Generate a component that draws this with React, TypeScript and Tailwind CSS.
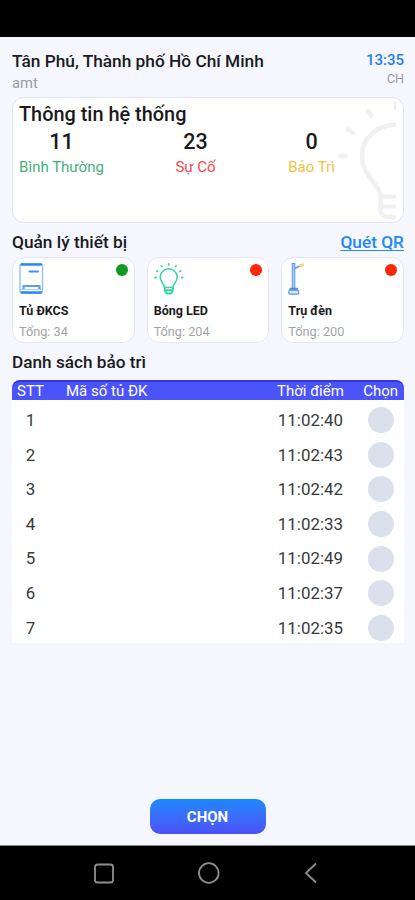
import { useState } from "react";

type Stat = {
  label: string;
  value: number;
  color: string;
  box: string;
};

type Device = {
  name: string;
  total: number;
  online: boolean;
  icon: React.ReactNode;
};

const stats: Stat[] = [
  { label: "Bình Thường", value: 11, color: "text-[#45b07c]", box: "w-[85px]" },
  { label: "Sự Cố", value: 23, color: "text-[#f4474b]", box: "w-[42px]" },
  { label: "Bảo Trì", value: 0, color: "text-[#f2c343]", box: "w-[49px]" },
];

const times = ["11:02:40", "11:02:43", "11:02:42", "11:02:33", "11:02:49", "11:02:37", "11:02:35"];

function CabinetIcon() {
  return (
    <svg width="25" height="33" viewBox="0 0 25 33" fill="none">
      <rect x="1" y="2" width="22.5" height="29" rx="2" stroke="#8dbcf8" strokeWidth="1.3" />
      <path d="M2.500 2.500h19.500M2.500 30.500h19.500" stroke="#2f88ef" strokeWidth="2.3" strokeLinecap="round" />
      <path d="M10.500 9.500h8.500" stroke="#3b90f2" strokeWidth="2" strokeLinecap="round" />
      <path d="M4.500 27v-3h16v3" stroke="#5a9ef3" strokeWidth="2.2" strokeLinejoin="round" />
      <path d="M1 27.500h22.500" stroke="#9cc6f8" strokeWidth="0.8" />
    </svg>
  );
}

function BulbIcon() {
  return (
    <svg width="30" height="33" viewBox="0 0 30 33" fill="none" stroke="#3bd3a4" strokeLinecap="round">
      <path d="M10.500 25.500c0-3.500-4.300-5.500-4.300-10.300a8.500 8.500 0 0 1 17 0c0 4.800-4.300 6.800-4.300 10.300z" strokeWidth="1.5" />
      <path d="M10.800 25.500v3.500l2 2.500h4l2-2.500v-3.500M11 28.300h7.500" strokeWidth="1.9" />
      <path
        d="M14.700 2v.8M7.500 4l.4.600M22 4l-.4.600M3 9l.6.400M26.600 9l-.6.400M1.200 15.500h.8M27.800 15.500h.8"
        strokeWidth="1.8"
      />
    </svg>
  );
}

function PoleIcon() {
  return (
    <svg width="18" height="33" viewBox="0 0 18 33" fill="none">
      <rect x="4.200" y="1.500" width="2.600" height="25" fill="#a9cdf7" stroke="#5a98e6" strokeWidth="1" />
      <path d="M6.500 6.500l6-2.700" stroke="#5a98e6" strokeWidth="1.5" />
      <path d="M12.500 3.500l2.300-.6" stroke="#f5d48a" strokeWidth="3" strokeLinecap="round" />
      <path d="M2 26.300h7.500v2.200H2z" fill="#5a98e6" stroke="#3b86e0" strokeWidth="0.9" />
      <rect x="0.800" y="28.200" width="10" height="4" rx="1.5" fill="#d6e7fb" stroke="#5a98e6" strokeWidth="1.2" />
    </svg>
  );
}

// faded half bulb on the right edge of the summary card
function BulbWatermark() {
  return (
    <svg
      className="absolute -top-px right-[7px]"
      width="60"
      height="126"
      viewBox="336 97 60 126"
      fill="none"
      stroke="#f0f0f0"
      strokeWidth="4.500"
    >
      <path d="M398 124.500C377 124.500 362 138 362 156C362 173 376 182 380.500 194V209Q380.500 217 389 217H398" />
      <path d="M380 196.500h18M380 206.500h18" strokeWidth="4" />
      <path d="M340.500 156h5.500M347.500 129.500l5.500 3.200M368 110.500l3 5M396 103v6" strokeLinecap="round" />
    </svg>
  );
}

const devices: Device[] = [
  { name: "Tủ ĐKCS", total: 34, online: true, icon: <CabinetIcon /> },
  { name: "Bóng LED", total: 204, online: false, icon: <BulbIcon /> },
  { name: "Trụ đèn", total: 200, online: false, icon: <PoleIcon /> },
];

function DeviceCard({ device }: { device: Device }) {
  return (
    <div className="flex h-[86px] flex-col rounded-xl border border-[#e6e6f2] bg-white pt-[4px] pr-[6px] pl-[6px]">
      <div className="flex h-[35px] items-start justify-between">
        {device.icon}
        <span
          className={
            device.online
              ? "mt-[2px] h-3 w-3 rounded-full bg-[#0f9a24]"
              : "mt-[2px] h-3 w-3 rounded-full bg-[#fb260c]"
          }
        />
      </div>
      <p className="mt-[5px] text-[12.5px] leading-[18px] font-bold text-[#1b1b1d]">{device.name}</p>
      <p className="mt-[3px] text-[12.7px] leading-[18px] text-[#a3a3a6]">Tổng: {device.total}</p>
    </div>
  );
}

export default function App() {
  const [selected, setSelected] = useState<number[]>([]);

  const toggle = (i: number) =>
    setSelected((prev) => (prev.includes(i) ? prev.filter((x) => x !== i) : [...prev, i]));

  return (
    <div className="flex h-[900px] w-[415px] flex-col overflow-hidden bg-[#f5f6fe] font-['Roboto','Liberation_Sans',sans-serif] whitespace-nowrap text-[#1a1a1c]">
      <div className="h-[37px] shrink-0 bg-black" />

      <main className="flex flex-1 flex-col px-3">
        <header className="flex h-[60px] w-[392px] justify-between pt-[13px]">
          <div>
            <h1 className="text-[17.3px] leading-[23px] font-medium">Tân Phú, Thành phố Hồ Chí Minh</h1>
            <p className="text-[14.8px] leading-[21px] text-[#9a9a9f]">amt</p>
          </div>
          <div className="text-right">
            <p className="text-[15px] leading-[20px] font-medium text-[#1e80f5]">13:35</p>
            <p className="text-[12.5px] leading-[17px] text-[#98989e]">CH</p>
          </div>
        </header>

        <section className="relative h-[126px] w-[392px] rounded-xl border border-[#e3e4f1] bg-white px-[6px] pt-[4px]">
          <BulbWatermark />
          <h2 className="text-[19.9px] leading-[26px] font-medium">Thông tin hệ thống</h2>
          <div className="flex w-[317px] justify-between">
            {stats.map((s) => (
              <div key={s.label} className={`flex flex-col items-center ${s.box}`}>
                <span className="text-[21.5px] leading-[28px] font-medium">{s.value}</span>
                <span className={`text-[15px] leading-[22px] ${s.color}`}>{s.label}</span>
              </div>
            ))}
          </div>
        </section>

        <div className="mt-[8px] flex h-[24px] w-[392px] items-center justify-between">
          <h2 className="text-[17.3px] font-medium">Quản lý thiết bị</h2>
          <a className="text-[17.3px] font-medium text-[#2389f5] underline decoration-1 underline-offset-2">Quét QR</a>
        </div>

        <section className="mt-[2px] grid w-[392px] grid-cols-3 gap-[12px]">
          {devices.map((d) => (
            <DeviceCard key={d.name} device={d} />
          ))}
        </section>

        <h2 className="mt-[7px] text-[17.2px] leading-[24px] font-medium">Danh sách bảo trì</h2>

        <section className="mt-[6px] w-[392px]">
          <div className="flex h-[20px] items-center rounded-t-lg border-t-2 border-[#3038e0] bg-[#4b54fa] pl-[5px] text-[15px] text-white">
            <span className="w-[49px]">STT</span>
            <span className="flex-1">Mã số tủ ĐK</span>
            <span className="w-[66px] text-right">Thời điểm</span>
            <span className="w-[61px] pr-[6px] text-right">Chọn</span>
          </div>
          <div className="h-[243px] bg-white pt-[3px]">
            {times.map((time, i) => (
              <div key={i} className="flex h-[34.6px] items-center text-[16.9px] text-[#39393c]">
                <span className="w-[37px] pt-[1px] text-center">{i + 1}</span>
                <span className="flex-1" />
                <span className="pt-[1px]">{time}</span>
                <button
                  aria-label={`Chọn ${i + 1}`}
                  onClick={() => toggle(i)}
                  className={
                    selected.includes(i)
                      ? "mr-[10px] ml-[25px] h-[26px] w-[26px] rounded-full bg-[#4b54fa]"
                      : "mr-[10px] ml-[25px] h-[26px] w-[26px] rounded-full bg-[#dbe1ec]"
                  }
                />
              </div>
            ))}
          </div>
        </section>

        <button className="mt-auto mb-[11px] h-[35px] w-[116px] self-center rounded-[10px] bg-linear-to-b from-[#1687ff] to-[#4a50f5] pt-[2px] text-[15px] font-bold text-white">
          CHỌN
        </button>
      </main>

      <nav className="flex h-[55px] shrink-0 items-center justify-between border-t border-[#8a8a8c] bg-black pr-[98px] pl-[93px]">
        <svg width="21" height="21" viewBox="0 0 21 21" fill="none" stroke="#8f8f8f" strokeWidth="1.8">
          <rect x="2" y="1.500" width="18" height="18" rx="2.5" />
        </svg>
        <svg width="22" height="22" viewBox="0 0 22 22" fill="none" stroke="#8f8f8f" strokeWidth="1.8">
          <circle cx="10.8" cy="11" r="9.800" />
        </svg>
        <svg width="14" height="22" viewBox="0 0 14 22" fill="none" stroke="#8f8f8f" strokeWidth="1.8">
          <path d="M13 1.500L3 11l10 9.500" />
        </svg>
      </nav>
    </div>
  );
}
